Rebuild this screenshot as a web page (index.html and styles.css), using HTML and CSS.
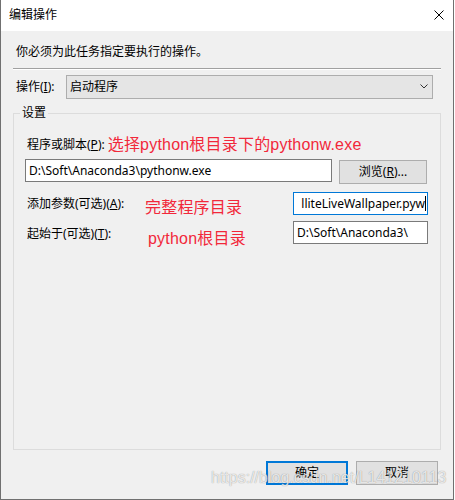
FILE: index.html
```html
<!DOCTYPE html>
<html lang="zh-CN">
<head>
<meta charset="utf-8">
<title>编辑操作</title>
<link rel="stylesheet" href="styles.css">
</head>
<body>
<div class="window">
  <div class="titlebar">
    <span class="title">编辑操作</span>
    <svg class="close" width="10" height="10" viewBox="0 0 10 10" aria-hidden="true">
      <path d="M0.5 0.5L9.5 9.5M9.5 0.5L0.5 9.5" stroke="#000" stroke-width="1" fill="none"/>
    </svg>
  </div>
  <div class="content">
    <div class="intro">你必须为此任务指定要执行的操作。</div>
    <div class="sep"></div>
    <div class="op-row">
      <span class="op-label">操作(<u>I</u>):</span>
      <div class="combo">
        <span class="combo-text">启动程序</span>
        <svg class="chevron" width="8" height="5" viewBox="0 0 8 5" aria-hidden="true">
          <path d="M0.5 0.5L4 4L7.5 0.5" stroke="#333" stroke-width="1" fill="none"/>
        </svg>
      </div>
    </div>
    <fieldset class="group">
      <legend class="legend">设置</legend>
      <div class="row row-prog">
        <span class="lbl">程序或脚本(<u>P</u>):</span>
        <span class="note note-prog">选择python根目录下的pythonw.exe</span>
      </div>
      <div class="row row-path">
        <div class="input input-wide">D:\Soft\Anaconda3\pythonw.exe</div>
        <div class="btn browse">浏览(<u>R</u>)...</div>
      </div>
      <div class="row row-args">
        <span class="lbl lbl-args">添加参数(可选)(<u>A</u>):</span>
        <span class="note note-args">完整程序目录</span>
        <div class="input input-short focused"><span class="scroll-text">lliteLiveWallpaper.pyw</span><span class="caret"></span></div>
      </div>
      <div class="row row-start">
        <span class="lbl lbl-start">起始于(可选)(<u>T</u>):</span>
        <span class="note note-start">python根目录</span>
        <div class="input input-short">D:\Soft\Anaconda3\</div>
      </div>
    </fieldset>
    <div class="buttons">
      <div class="btn action default">确定</div>
      <div class="btn action">取消</div>
    </div>
  </div>
  <div class="watermark">https://blog.csdn.net/L141210113</div>
</div>
</body>
</html>
```

FILE: styles.css
```css
html, body {
  margin: 0;
  padding: 0;
  background: #ffffff;
}

body {
  font-family: "Noto Sans", "Noto Sans CJK SC", sans-serif;
  font-size: 12px;
  color: #000;
}

.window {
  position: relative;
  width: 454px;
  height: 500px;
  box-sizing: border-box;
  border: 1px solid #707070;
  border-top: none;
  background: #f0f0f0;
  display: flex;
  flex-direction: column;
}

.titlebar {
  height: 31px;
  flex: none;
  background: #ffffff;
  display: flex;
  align-items: center;
  justify-content: space-between;
  padding: 0 9px 1px 8px;
  box-sizing: border-box;
}

.title {
  font-size: 12px;
  line-height: 16px;
}

.close {
  display: block;
}

.content {
  flex: 1;
  display: flex;
  flex-direction: column;
  padding-top: 11px;
}

.intro {
  padding-left: 15px;
  line-height: 20px;
  height: 20px;
}

.sep {
  margin: 6px 0 0 12px;
  width: 428px;
  height: 0;
  border-top: 1px solid #a0a0a0;
  border-bottom: 1px solid #ffffff;
}

.op-row {
  margin-top: 5px;
  padding-left: 15px;
  display: flex;
  height: 24px;
}

.op-label {
  width: 50px;
  line-height: 24px;
}

.combo {
  width: 367px;
  height: 24px;
  box-sizing: border-box;
  border: 1px solid #adadad;
  background: #e5e5e5;
  display: flex;
  align-items: center;
  justify-content: space-between;
  padding: 0 4px 0 3px;
}

.combo-text {
  line-height: 20px;
}

.chevron {
  display: block;
  margin-top: -1px;
}

.group {
  margin: 6px 0 0 12px;
  width: 428px;
  height: 345px;
  box-sizing: border-box;
  border: 1px solid #dcdcdc;
  padding: 14px 12px 0 11px;
  min-width: 0;
}

.legend {
  margin-left: -5px;
  padding: 0 2px;
  line-height: 16px;
  font-size: 12px;
}

.row {
  display: flex;
}

.row-prog {
  height: 20px;
  align-items: flex-start;
}

.lbl {
  padding-left: 2px;
  line-height: 20px;
  white-space: nowrap;
  flex: none;
}

.note {
  color: #f2283a;
  font-family: "Liberation Sans", "Noto Sans CJK SC", sans-serif;
  font-size: 16px;
  letter-spacing: 0.2px;
  white-space: nowrap;
  flex: none;
}

.note-prog {
  margin-left: 3px;
  line-height: 20px;
}

.row-path {
  margin-top: 4px;
  align-items: flex-start;
}

.input {
  height: 23px;
  box-sizing: border-box;
  border: 1px solid #7a7a7a;
  background: #ffffff;
  padding-left: 3px;
  line-height: 21px;
  white-space: nowrap;
  overflow: hidden;
}

.input-wide {
  width: 307px;
}

.btn {
  box-sizing: border-box;
  height: 24px;
  border: 1px solid #adadad;
  background: #e1e1e1;
  text-align: center;
  line-height: 22px;
}

.browse {
  margin-left: 7px;
  margin-top: 1px;
  width: 88px;
}

.row-args {
  margin-top: 8px;
  height: 23px;
  align-items: flex-start;
}

.lbl-args {
  width: 118px;
  padding-top: 2px;
}

.note-args {
  line-height: 20px;
  padding-top: 6px;
}

.input-short {
  margin-left: auto;
  width: 135px;
}

.focused {
  border-color: #0078d7;
  display: flex;
  justify-content: flex-end;
  align-items: center;
  padding: 0 1px 0 2px;
}

.scroll-text {
  flex: none;
  line-height: 21px;
}

.caret {
  flex: none;
  width: 1px;
  height: 15px;
  background: #000;
}

.row-start {
  margin-top: 6px;
  height: 23px;
  align-items: flex-start;
}

.lbl-start {
  width: 121px;
  padding-top: 3px;
}

.note-start {
  line-height: 20px;
  padding-top: 8px;
}

.buttons {
  margin-top: 11px;
  display: flex;
  justify-content: flex-end;
  gap: 8px;
  padding-right: 15px;
}

.action {
  width: 82px;
}

.default {
  border: 2px solid #0078d7;
  line-height: 20px;
}

.watermark {
  position: absolute;
  left: 210px;
  top: 469px;
  font-family: "Liberation Sans", sans-serif;
  font-size: 16px;
  line-height: 18px;
  color: rgba(255, 255, 255, 0.8);
  text-shadow: 0 0 1px rgba(0, 0, 0, 0.45);
  white-space: nowrap;
  pointer-events: none;
}
```
